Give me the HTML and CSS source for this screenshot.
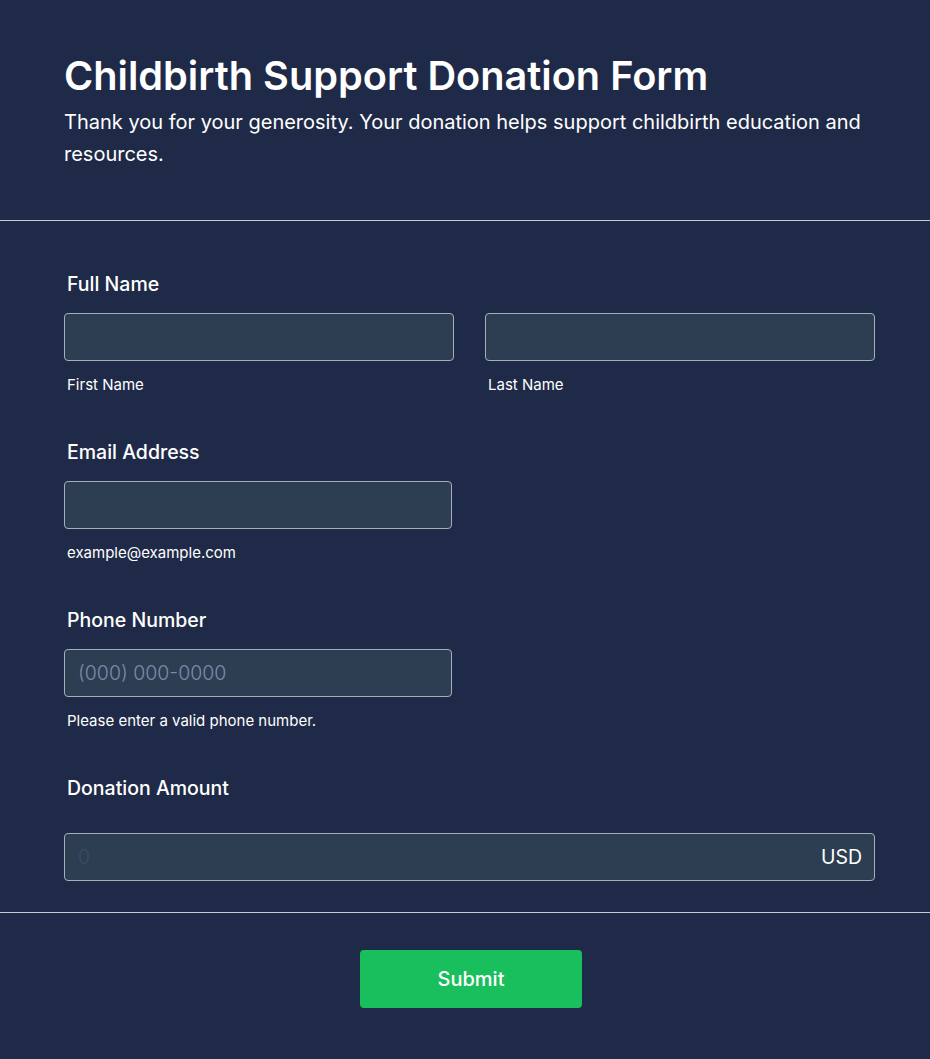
FILE: index.html
```html
<!DOCTYPE html>
<html lang="en">
<head>
<meta charset="utf-8">
<title>Childbirth Support Donation Form</title>
<link rel="stylesheet" href="styles.css">
</head>
<body>
<div class="page">
  <header class="header">
    <h1 class="title">Childbirth Support Donation Form</h1>
    <p class="subtitle">Thank you for your generosity. Your donation helps support childbirth education and resources.</p>
  </header>
  <form class="form">
    <div class="field">
      <div class="label">Full Name</div>
      <div class="row">
        <div class="col">
          <div class="input"></div>
          <div class="sublabel">First Name</div>
        </div>
        <div class="col">
          <div class="input"></div>
          <div class="sublabel">Last Name</div>
        </div>
      </div>
    </div>
    <div class="field">
      <div class="label">Email Address</div>
      <div class="half">
        <div class="input"></div>
        <div class="sublabel">example@example.com</div>
      </div>
    </div>
    <div class="field">
      <div class="label">Phone Number</div>
      <div class="half">
        <div class="input"><span class="placeholder">(000) 000-0000</span></div>
        <div class="sublabel">Please enter a valid phone number.</div>
      </div>
    </div>
    <div class="field donation">
      <div class="label">Donation Amount</div>
      <div class="input amount"><span class="placeholder zero">0</span><span class="currency">USD</span></div>
    </div>
  </form>
  <footer class="footer">
    <button type="button" class="submit">Submit</button>
  </footer>
</div>
</body>
</html>
```
FILE: styles.css
```css
html, body {
  margin: 0;
  padding: 0;
  background: #1f2a48;
}
body {
  font-family: Inter, "Noto Sans", sans-serif;
  color: #ffffff;
}
.page {
  width: 930px;
  min-height: 1059px;
  background: #1f2a48;
}
.header {
  padding: 52px 64px 0 64px;
  box-sizing: border-box;
  border-bottom: 1px solid #c8ccd4;
  height: 221px;
}
.title {
  margin: 0;
  font-size: 39.7px;
  font-weight: 600;
  line-height: 48px;
}
.subtitle {
  margin: 6px 0 0 0;
  font-size: 20px;
  font-weight: 400;
  line-height: 32px;
}
.form {
  padding: 51px 55px 31px 64px;
  display: flex;
  flex-direction: column;
  gap: 45px;
  border-bottom: 1px solid #c8ccd4;
}
.field {
  display: flex;
  flex-direction: column;
}
.label {
  font-size: 19.5px;
  font-weight: 450;
  line-height: 24px;
  padding-left: 3px;
  margin-bottom: 17px;
}
.donation .label {
  margin-bottom: 33px;
}
.row {
  display: flex;
  gap: 31px;
}
.col {
  width: 390px;
}
.half {
  width: 388px;
}
.input {
  height: 48px;
  box-sizing: border-box;
  border: 1px solid #a8adba;
  border-radius: 4px;
  background: #2d3e52;
  display: flex;
  align-items: center;
  padding: 0 12px 0 13px;
}
.amount {
  width: 811px;
  justify-content: space-between;
}
.placeholder {
  font-size: 19.5px;
  color: #7b8ca8;
  font-weight: 300;
}
.zero {
  color: #3d4b63;
}
.currency {
  font-size: 19.5px;
  color: #ffffff;
  font-weight: 400;
}
.sublabel {
  font-size: 15px;
  line-height: 20px;
  margin-top: 14px;
  padding-left: 3px;
}
.footer {
  display: flex;
  justify-content: center;
  padding: 37px 0 50px 0;
}
.submit {
  width: 222px;
  height: 58px;
  border: none;
  border-radius: 4px;
  background: #18bf5c;
  color: #ffffff;
  font-family: Inter, "Noto Sans", sans-serif;
  font-size: 20px;
  font-weight: 450;
  margin-left: 12px;
}
```
